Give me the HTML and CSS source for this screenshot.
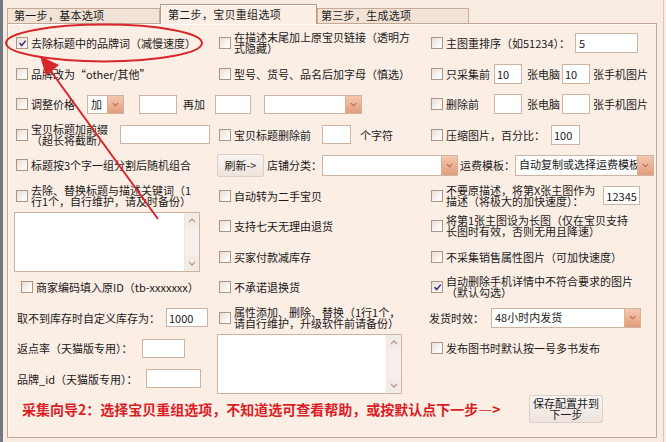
FILE: index.html
```html
<!DOCTYPE html>
<html lang="zh-CN">
<head>
<meta charset="utf-8">
<title>采集向导 - 宝贝重组选项</title>
<link rel="stylesheet" href="styles.css">
</head>
<body>
<div class="screen">
  <div class="tabs">
    <div class="tab tab-first">第一步，基本选项</div>
    <div class="tab tab-active">第二步，宝贝重组选项</div>
    <div class="tab tab-third">第三步，生成选项</div>
  </div>
  <div class="panel">
    <div class="form">
      <!-- row 1 -->
      <div class="cell"><label class="cb"><span class="box"><svg viewBox="0 0 10 10"><path d="M1.8 4.6 4.2 7.2 8.6 1.8"/></svg></span><span>去除标题中的品牌词（减慢速度）</span></label></div>
      <div class="cell"><label class="cb"><span class="box"></span><span class="two">在描述末尾加上原宝贝链接（透明方<br>式隐藏）</span></label></div>
      <div class="cell"><label class="cb"><span class="box"></span><span>主图重排序（如51234）：</span></label><input class="inp in-sort" type="text" value="5"></div>

      <!-- row 2 -->
      <div class="cell"><label class="cb"><span class="box"></span><span>品牌改为“other/其他”</span></label></div>
      <div class="cell"><label class="cb"><span class="box"></span><span>型号、货号、品名后加字母（慎选）</span></label></div>
      <div class="cell"><label class="cb"><span class="box"></span><span class="lead">只采集前</span></label><input class="inp in-num" type="text" value="10"><span class="unit">张电脑</span><input class="inp in-num2" type="text" value="10"><span class="unit2">张手机图片</span></div>

      <!-- row 3 -->
      <div class="cell span2"><label class="cb"><span class="box"></span><span>调整价格</span></label>
        <div class="select sel-op"><span class="val">加</span><span class="dd"><svg viewBox="0 0 8 5"><path d="M1 1 4 4 7 1"/></svg></span></div>
        <input class="inp in-price" type="text" value="">
        <span class="add-lbl">再加</span>
        <input class="inp in-price2" type="text" value="">
        <div class="select sel-wide"><span class="val"></span><span class="dd"><svg viewBox="0 0 8 5"><path d="M1 1 4 4 7 1"/></svg></span></div>
      </div>
      <div class="cell"><label class="cb"><span class="box"></span><span class="lead">删除前</span></label><input class="inp in-num" type="text" value=""><span class="unit">张电脑</span><input class="inp in-num2" type="text" value=""><span class="unit2">张手机图片</span></div>

      <!-- row 4 -->
      <div class="cell"><label class="cb"><span class="box"></span><span class="two">宝贝标题加前缀<br>（超长将截断）</span></label><input class="inp in-prefix" type="text" value=""></div>
      <div class="cell"><label class="cb"><span class="box"></span><span>宝贝标题删除前</span></label><input class="inp in-del" type="text" value=""><span class="unit-far">个字符</span></div>
      <div class="cell"><label class="cb"><span class="box"></span><span>压缩图片，百分比：</span></label><input class="inp in-pct" type="text" value="100"></div>

      <!-- row 5 -->
      <div class="cell"><label class="cb"><span class="box"></span><span>标题按3个字一组分割后随机组合</span></label></div>
      <div class="cell span2">
        <button class="btn btn-refresh" type="button">刷新-&gt;</button>
        <span class="shop-lbl">店铺分类：</span>
        <div class="select sel-shop"><span class="val"></span><span class="dd"><svg viewBox="0 0 8 5"><path d="M1 1 4 4 7 1"/></svg></span></div>
        <span class="ship-lbl">运费模板：</span>
        <div class="select sel-ship"><span class="val">自动复制或选择运费模板</span><span class="dd"><svg viewBox="0 0 8 5"><path d="M1 1 4 4 7 1"/></svg></span></div>
      </div>

      <!-- row 6 -->
      <div class="cell"><label class="cb"><span class="box"></span><span class="two">去除、替换标题与描述关键词（1<br>行1个，自行维护，请及时备份）</span></label></div>
      <div class="cell"><label class="cb"><span class="box"></span><span>自动转为二手宝贝</span></label></div>
      <div class="cell"><label class="cb"><span class="box"></span><span class="two">不要原描述，将第X张主图作为<br>描述（将极大的加快速度）：</span></label><input class="inp in-pic" type="text" value="12345"></div>

      <!-- row 7 -->
      <div class="cell rows2"><div class="memo memo-left"><textarea></textarea><div class="scroll"><span><svg viewBox="0 0 8 5"><path d="M1 4 4 1 7 4"/></svg></span><span><svg viewBox="0 0 8 5"><path d="M1 1 4 4 7 1"/></svg></span></div></div></div>
      <div class="cell"><label class="cb"><span class="box"></span><span>支持七天无理由退货</span></label></div>
      <div class="cell"><label class="cb"><span class="box"></span><span class="two">将第1张主图设为长图（仅在宝贝支持<br>长图时有效，否则无用且降速）</span></label></div>

      <!-- row 8 -->
      <div class="cell"><label class="cb"><span class="box"></span><span>买家付款减库存</span></label></div>
      <div class="cell"><label class="cb"><span class="box"></span><span>不采集销售属性图片（可加快速度）</span></label></div>

      <!-- row 9 -->
      <div class="cell"><label class="cb indent"><span class="box"></span><span>商家编码填入原ID（tb-xxxxxxx）</span></label></div>
      <div class="cell"><label class="cb"><span class="box"></span><span>不承诺退换货</span></label></div>
      <div class="cell"><label class="cb"><span class="box"><svg viewBox="0 0 10 10"><path d="M1.8 4.6 4.2 7.2 8.6 1.8"/></svg></span><span class="two">自动删除手机详情中不符合要求的图片<br>（默认勾选）</span></label></div>

      <!-- row 10 -->
      <div class="cell"><span class="plain">取不到库存时自定义库存为：</span><input class="inp in-stock" type="text" value="1000"></div>
      <div class="cell"><label class="cb"><span class="box"></span><span class="two">属性添加、删除、替换（1行1个，<br>请自行维护，升级软件前请备份）</span></label></div>
      <div class="cell"><span class="time-lbl">发货时效：</span><div class="select sel-time"><span class="val">48小时内发货</span><span class="dd"><svg viewBox="0 0 8 5"><path d="M1 1 4 4 7 1"/></svg></span></div></div>

      <!-- row 11 -->
      <div class="cell"><span class="plain">返点率（天猫版专用）：</span><input class="inp in-rebate" type="text" value=""></div>
      <div class="cell rows2"><div class="memo memo-mid"><textarea></textarea><div class="scroll"><span><svg viewBox="0 0 8 5"><path d="M1 4 4 1 7 4"/></svg></span><span><svg viewBox="0 0 8 5"><path d="M1 1 4 4 7 1"/></svg></span></div></div></div>
      <div class="cell"><label class="cb"><span class="box"></span><span>发布图书时默认按一号多书发布</span></label></div>

      <!-- row 12 -->
      <div class="cell"><span class="plain">品牌_id（天猫版专用）：</span><input class="inp in-brand" type="text" value=""></div>
      <div class="cell"></div>

      <!-- row 13 -->
      <div class="cell span2"><span class="guide">采集向导2：选择宝贝重组选项，不知道选可查看帮助，或按默认点下一步—&gt;</span></div>
      <div class="cell"><button class="btn btn-save" type="button">保存配置并到<br>下一步</button></div>
    </div>
  </div>
  <svg class="annot" viewBox="0 0 666 442">
    <ellipse cx="104" cy="43" rx="98" ry="18.5" fill="none" stroke="#d8262b" stroke-width="2"/>
    <line x1="158" y1="219" x2="50" y2="70" stroke="#d8262b" stroke-width="2"/>
    <polygon points="40,56 59,65 46,76" fill="#d8262b"/>
  </svg>
</div>
</body>
</html>
```

FILE: styles.css
```css
* { box-sizing: border-box; }

html, body { margin: 0; padding: 0; }

body {
  width: 666px;
  height: 442px;
  overflow: hidden;
  font-family: "Noto Sans CJK SC", "Noto Sans", sans-serif;
  font-size: 11px;
  color: #1a1a1a;
  background:
    linear-gradient(to right, #747784 0, #747784 3px, transparent 3px),
    linear-gradient(to right, transparent 663px, #d9c5b9 663px, #d9c5b9 664px, transparent 664px),
    #f7ebe2;
}

.screen {
  position: relative;
  width: 666px;
  height: 442px;
}

/* ---------- tabs ---------- */
.tabs {
  display: flex;
  align-items: flex-end;
  height: 23px;
  margin-left: 7px;
}

.tab {
  height: 15px;
  line-height: 13px;
  padding-left: 6px;
  border: 1px solid #c6ab9b;
  border-bottom: none;
  background: #f3e2d6;
  letter-spacing: 0.3px;
  white-space: nowrap;
}

.tab-first { width: 153px; }

.tab-active {
  position: relative;
  z-index: 1;
  width: 157px;
  height: 20px;
  line-height: 19px;
  padding-left: 7px;
  margin-bottom: -1px;
  background: #faeee5;
  border-color: #b59a8a;
  box-shadow: inset 1px 1px 0 #fffaf6;
}

.tab-third { width: 152px; padding-left: 3px; }

/* ---------- panel ---------- */
.panel {
  width: 650px;
  height: 415px;
  margin-left: 7px;
  border: 1px solid #c3a897;
  background: #faeee5;
  box-shadow: inset 1px 1px 0 #fffaf7;
}

.form {
  display: grid;
  grid-template-columns: 203px 212px 225px;
  grid-auto-rows: 30.5px;
  padding: 4px 0 0 8px;
}

.cell {
  display: flex;
  align-items: center;
  white-space: nowrap;
  min-width: 0;
}

.span2 { grid-column: span 2; }
.rows2 { grid-row: span 2; }

/* ---------- checkbox ---------- */
.cb {
  display: flex;
  align-items: center;
}

.cb.indent { margin-left: 5px; }

.box {
  flex: none;
  display: flex;
  align-items: center;
  justify-content: center;
  width: 12px;
  height: 12px;
  margin-right: 3px;
  border: 1px solid #ab9585;
  background: linear-gradient(135deg, #e8ddd5 0%, #fbf8f6 70%, #ffffff 100%);
}

.box svg {
  width: 9px;
  height: 9px;
  fill: none;
  stroke: #3a2e88;
  stroke-width: 1.7;
}

.two { line-height: 11px; }

.lead { width: 44px; }

/* ---------- text inputs ---------- */
.inp {
  height: 19px;
  margin: 0;
  padding: 0 3px;
  border: 1px solid #cfb4a4;
  background: #ffffff;
  font-family: inherit;
  font-size: 11px;
  color: #1a1a1a;
  outline: none;
}

.in-sort { width: 63px; margin-left: 5px; height: 20px; }
.in-num { width: 28px; margin-left: 4px; height: 20px; padding: 0 2px; }
.unit { margin-left: 5px; }
.in-num2 { width: 28px; margin-left: 2px; height: 20px; padding: 0 2px; }
.unit2 { margin-left: 3px; }

.in-price { width: 38px; margin-left: 15px; }
.add-lbl { margin-left: 6px; }
.in-price2 { width: 36px; margin-left: 10px; }

.in-prefix { width: 90px; margin-left: 12px; }
.in-del { width: 29px; margin-left: 11px; }
.unit-far { margin-left: 9px; }
.in-pct { width: 29px; margin-left: 6px; height: 20px; padding: 0 2px; }

.in-pic { width: 37px; margin-left: 8px; padding: 0 2px; }

.plain { margin-left: 1px; }
.in-stock { width: 42px; margin-left: 6px; padding: 0 2px; }
.in-rebate { width: 43px; margin-left: 9px; }
.in-brand { width: 55px; margin-left: 8px; }

/* ---------- selects ---------- */
.select {
  display: flex;
  height: 19px;
  border: 1px solid #cfb4a4;
  background: #ffffff;
}

.select .val {
  flex: 1;
  min-width: 0;
  overflow: hidden;
  padding-left: 3px;
  line-height: 17px;
}

.select .dd {
  flex: none;
  width: 16px;
  display: flex;
  align-items: center;
  justify-content: center;
  border-left: 1px solid #e4ae92;
  background: linear-gradient(#f4c8ae, #e19d7c);
}

.dd svg {
  width: 7px;
  height: 5px;
  fill: none;
  stroke: #b76546;
  stroke-width: 1.2;
}

.sel-op { width: 37px; margin-left: 12px; }
.sel-wide { width: 98px; margin-left: 13px; }

.shop-lbl { margin-left: 3px; }
.sel-shop { width: 136px; margin-left: 0; height: 21px; }
.ship-lbl { margin-left: 2px; }
.sel-ship { width: 139px; margin-left: 0; height: 21px; }

.time-lbl { margin-left: -2px; }
.sel-time { width: 150px; margin-left: 7px; height: 20px; }

/* ---------- buttons ---------- */
.btn {
  margin: 0;
  padding: 0;
  font-family: inherit;
  font-size: 11px;
  color: #1a1a1a;
  border: 1px solid #dccfc8;
  border-radius: 2px;
  background: linear-gradient(#faf5f2, #ede3dd);
}

.btn-refresh { width: 47px; height: 23px; margin-left: -2px; }

.btn-save {
  width: 74px;
  height: 28px;
  margin-left: 98px;
  line-height: 11px;
}

/* ---------- memo boxes ---------- */
.memo {
  display: flex;
  height: 60px;
  margin-left: -2px;
  border: 1px solid #ccb3a3;
  background: #ffffff;
}

.memo-left { width: 186px; }
.memo-mid { width: 185px; }

.memo textarea {
  flex: 1;
  min-width: 0;
  margin: 0;
  padding: 2px;
  border: none;
  resize: none;
  outline: none;
  background: transparent;
  font-family: inherit;
  font-size: 11px;
}

.scroll {
  flex: none;
  width: 15px;
  display: flex;
  flex-direction: column;
  justify-content: space-between;
  background: #f6efeb;
  border-left: 1px solid #f0e6e0;
}

.scroll span {
  height: 15px;
  display: flex;
  align-items: center;
  justify-content: center;
  background: #f3ebe6;
}

.scroll svg {
  width: 8px;
  height: 5px;
  fill: none;
  stroke: #b99a8a;
  stroke-width: 1.3;
}

/* ---------- guide text ---------- */
.guide {
  padding-left: 6px;
  font-size: 14px;
  font-weight: 700;
  color: #dc1d25;
}

/* ---------- annotation overlay ---------- */
.annot {
  position: absolute;
  left: 0;
  top: 0;
  width: 666px;
  height: 442px;
  pointer-events: none;
  z-index: 5;
}
```
